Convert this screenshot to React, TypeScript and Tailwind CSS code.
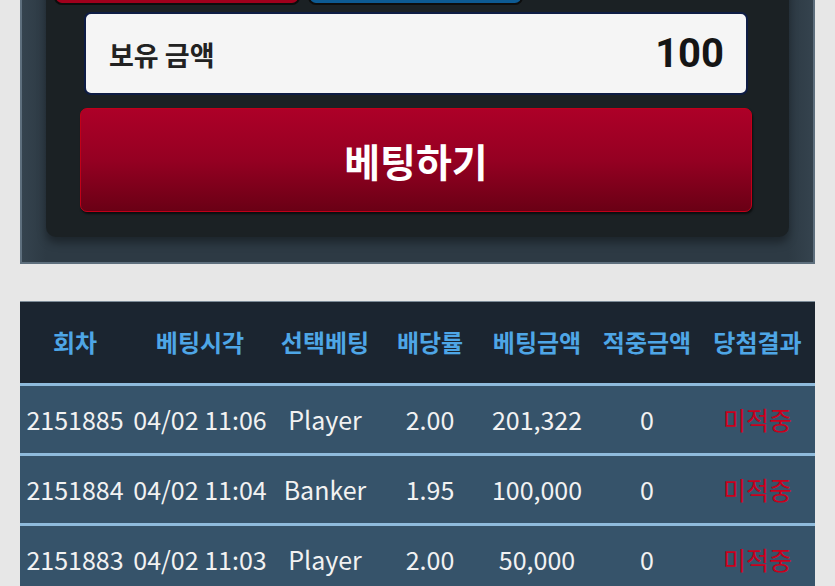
import React from "react";

const cols = ["w-[110px]", "w-[140px]", "w-[110px]", "w-[100px]", "w-[114px]", "w-[106px]", "w-[115px]"];
const headers = ["회차", "베팅시각", "선택베팅", "배당률", "베팅금액", "적중금액", "당첨결과"];
const rows = [
  ["2151885", "04/02 11:06", "Player", "2.00", "201,322", "0", "미적중"],
  ["2151884", "04/02 11:04", "Banker", "1.95", "100,000", "0", "미적중"],
  ["2151883", "04/02 11:03", "Player", "2.00", "50,000", "0", "미적중"],
];

export default function App() {
  return (
    <div
      className="h-[586px] overflow-hidden bg-[#e7e7e7]"
      style={{ fontFamily: '"Noto Sans CJK KR", "Noto Sans", sans-serif' }}
    >
      {/* top panel */}
      <div className="mx-[20px] -mt-[50px] bg-[linear-gradient(90deg,#35434e_0px,#2d3a44_24px,#2d3a44_calc(100%-24px),#35434e_100%)] border-x-2 border-b-2 border-[#5e6f7d] px-[24px] pb-[25px]">
        <div className="bg-[#1b2124] rounded-b-[10px] shadow-[0_6px_8px_rgba(0,0,0,0.35)] px-[8px] pb-[25px]">
          <div className="flex gap-[8px] h-[55px]">
            <div className="w-[246px] h-full bg-[#a0001c] border-2 border-[#0d0d0d] rounded-b-[8px]" />
            <div className="w-[215px] h-full bg-[#0d5a92] border-2 border-[#0d0d0d] rounded-b-[8px]" />
          </div>
          <div className="mx-[26px] mt-[7px]">
            <div className="ml-[4px] w-[664px] h-[83px] bg-[#f5f5f5] border-2 border-[#0e1c44] rounded-[7px] flex items-center justify-between pl-[23px] pr-[22px]">
              <span className="text-[27px] font-bold text-[#222] pt-[3px]">보유 금액</span>
              <span className="text-[40px] font-bold text-[#151515] leading-none" style={{ fontFamily: "Roboto, sans-serif" }}>100</span>
            </div>
            <div className="mt-[13px] w-[672px] h-[104px] rounded-[7px] border border-[#c10018] bg-[linear-gradient(180deg,#ad0028_0%,#950022_50%,#6a0015_100%)] shadow-[1px_2px_2px_rgba(0,0,0,0.6)] flex items-center justify-center">
              <span className="text-[39px] font-bold text-white leading-none">베팅하기</span>
            </div>
          </div>
        </div>
      </div>

      {/* table */}
      <div className="mx-[20px] mt-[37px] border-t border-[#7d8c98]">
        <div className="flex h-[81px] items-center bg-[#1b2530] pb-[2px]">
          {headers.map((h, i) => (
            <div key={i} className={`${cols[i]} text-center text-[24px] font-bold text-[#4ea6e6]`}>
              {h}
            </div>
          ))}
        </div>
        {rows.map((r, ri) => (
          <div key={ri} className="flex h-[70px] items-center bg-[#36536a] border-t-[3px] border-[#8fbbdc]">
            {r.map((c, ci) => (
              <div
                key={ci}
                className={`${cols[ci]} text-center text-[25px] ${ci === 6 ? "text-[#c8001c]" : "text-[#f2f2f2]"} whitespace-nowrap`}
              >
                {c}
              </div>
            ))}
          </div>
        ))}
      </div>
    </div>
  );
}
